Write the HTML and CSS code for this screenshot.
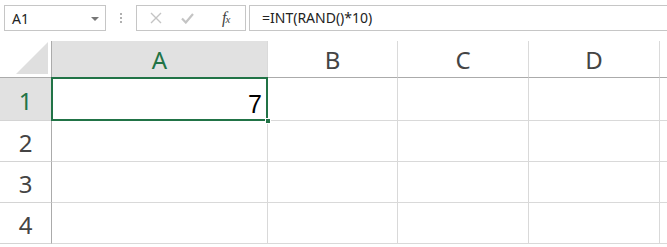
FILE: index.html
```html
<!DOCTYPE html>
<html lang="en">
<head>
    <meta charset="UTF-8">
    <title>Sheet1 - RAND</title>
    <link rel="stylesheet" href="styles.css">
</head>
<body>

    <!-- Formula Bar -->
    <div class="formula-bar">
        <div class="name-box">
            <span>A1</span>
            <span class="caret"></span>
        </div>
        <div class="grip"><i></i><i></i><i></i></div>
        <div class="fx-buttons">
            <svg class="icon" width="12" height="12" viewBox="0 0 12 12">
                <path d="M1 1 L11 11 M11 1 L1 11" stroke="#c4c4c4" stroke-width="1.4" fill="none"/>
            </svg>
            <svg class="icon" width="13" height="11" viewBox="0 0 13 11">
                <path d="M1 5.5 L4.8 9.5 L12 1" stroke="#c4c4c4" stroke-width="2.2" fill="none"/>
            </svg>
            <span class="fx">f<sub>x</sub></span>
        </div>
        <div class="formula-input">=INT(RAND()*10)</div>
    </div>

    <!-- Worksheet Grid -->
    <div class="sheet">
        <div class="corner"><span class="tri"></span></div>
        <div class="col-head active">A</div>
        <div class="col-head">B</div>
        <div class="col-head">C</div>
        <div class="col-head">D</div>
        <div class="col-head last"></div>

        <div class="row-head active">1</div>
        <div class="cell selected">7<span class="handle"></span></div>
        <div class="cell"></div>
        <div class="cell"></div>
        <div class="cell"></div>
        <div class="cell last"></div>

        <div class="row-head">2</div>
        <div class="cell"></div>
        <div class="cell"></div>
        <div class="cell"></div>
        <div class="cell"></div>
        <div class="cell last"></div>

        <div class="row-head">3</div>
        <div class="cell"></div>
        <div class="cell"></div>
        <div class="cell"></div>
        <div class="cell"></div>
        <div class="cell last"></div>

        <div class="row-head">4</div>
        <div class="cell"></div>
        <div class="cell"></div>
        <div class="cell"></div>
        <div class="cell"></div>
        <div class="cell last"></div>
    </div>

</body>
</html>
```

FILE: styles.css
```css
/* General Reset */
html, body {
    margin: 0;
    padding: 0;
    background: #fff;
    font-family: "Noto Sans", "Open Sans", sans-serif;
    overflow: hidden;
}

* {
    box-sizing: border-box;
}

/* Formula Bar */
.formula-bar {
    display: flex;
    align-items: center;
    height: 41px;
    padding: 0 0 5px 4px;
}

.name-box {
    display: flex;
    align-items: center;
    justify-content: space-between;
    width: 102px;
    height: 26px;
    border: 1px solid #c6c6c6;
    padding: 0 6px 0 7px;
    font-size: 14px;
    color: #222;
}

.caret {
    width: 0;
    height: 0;
    border-left: 4px solid transparent;
    border-right: 4px solid transparent;
    border-top: 4px solid #777;
    margin-top: 1px;
}

.grip {
    display: flex;
    flex-direction: column;
    gap: 2px;
    width: 30px;
    align-items: center;
}

.grip i {
    display: block;
    width: 2px;
    height: 2px;
    background: #b0b0b0;
}

.fx-buttons {
    display: flex;
    align-items: center;
    width: 110px;
    height: 26px;
    border: 1px solid #c6c6c6;
    padding-left: 13px;
}

.fx-buttons .icon {
    margin-right: 19px;
}

.fx-buttons .icon + .icon {
    margin-right: 28px;
}

.fx {
    font-family: "Liberation Serif", serif;
    font-style: italic;
    font-size: 16px;
    color: #444;
    line-height: 1;
}

.fx sub {
    font-size: 11px;
    vertical-align: 0;
    margin-left: -1px;
}

.formula-input {
    flex: 1;
    height: 26px;
    margin-left: 3px;
    border: 1px solid #c6c6c6;
    border-right: none;
    padding-left: 12px;
    font-size: 14px;
    line-height: 24px;
    color: #222;
}

/* Worksheet Grid */
.sheet {
    display: grid;
    grid-template-columns: 52px 216px 130px 131px 131px 1fr;
    grid-template-rows: 37px 43px 41px 41px 41px;
}

.corner {
    position: relative;
    border-right: 1px solid #ababab;
    border-bottom: 1px solid #ababab;
}

.tri {
    position: absolute;
    right: 3px;
    bottom: 3px;
    width: 32px;
    height: 32px;
    background: #dfdfdf;
    clip-path: polygon(100% 0, 100% 100%, 0 100%);
}

.col-head {
    display: flex;
    align-items: center;
    justify-content: center;
    border-right: 1px solid #dadada;
    border-bottom: 1px solid #ababab;
    font-size: 24px;
    color: #444;
}

.row-head {
    display: flex;
    align-items: center;
    justify-content: center;
    padding-top: 2px;
    border-right: 1px solid #ababab;
    border-bottom: 1px solid #d4d4d4;
    font-size: 24px;
    color: #444;
}

.col-head.active,
.row-head.active {
    background: #e1e1e1;
    color: #217346;
}

.col-head.last,
.cell.last {
    border-right: none;
}

.cell {
    border-right: 1px solid #d9d9d9;
    border-bottom: 1px solid #d9d9d9;
}

/* Active cell */
.cell.selected {
    position: relative;
    display: flex;
    align-items: flex-end;
    justify-content: flex-end;
    padding: 0 5px 1px 0;
    font-family: "Liberation Sans", Arial, sans-serif;
    font-size: 25px;
    color: #000;
}

.cell.selected::after {
    content: "";
    position: absolute;
    left: -1px;
    top: -1px;
    right: -1px;
    bottom: -1px;
    border: 2px solid #217346;
}

.handle {
    position: absolute;
    right: -4px;
    bottom: -4px;
    width: 6px;
    height: 6px;
    background: #217346;
    border: 1px solid #fff;
    z-index: 2;
}
```
